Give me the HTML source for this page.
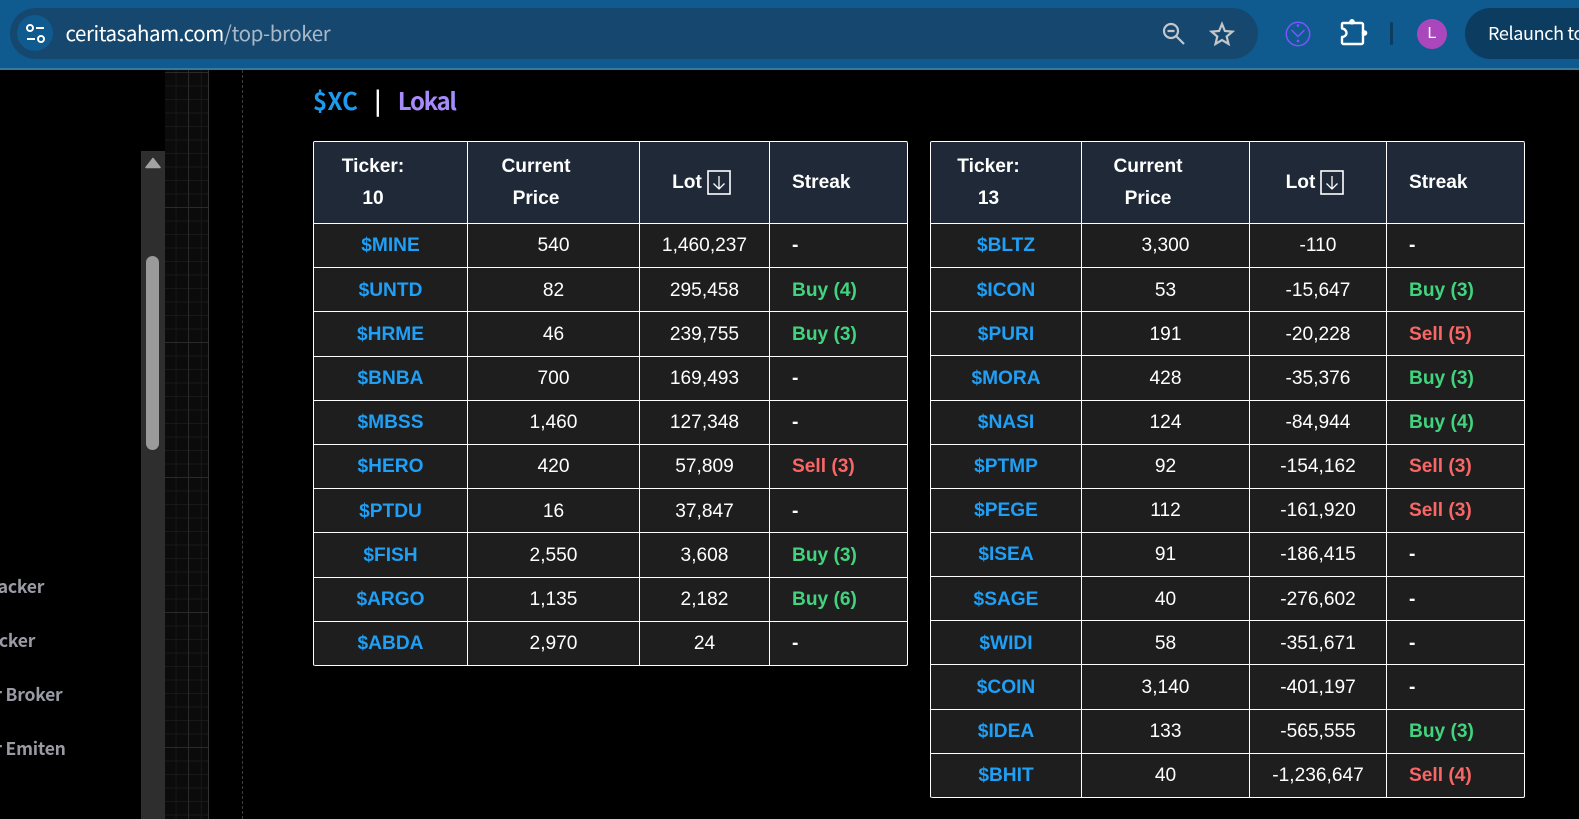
<!DOCTYPE html>
<html lang="en">
<head>
<meta charset="utf-8">
<title>ceritasaham.com/top-broker</title>
<style>
html,body{margin:0;padding:0;width:1579px;height:819px;background:#000;overflow:hidden;font-family:"Liberation Sans",Arial,sans-serif}
.abs{position:absolute}
#top{left:0;top:0;width:1579px;height:68px;background:#0f5a8f;border-bottom:2px solid #37789f}
#addr{left:10px;top:8px;width:1248px;height:51px;border-radius:26px;background:#16486f}
#site{left:17px;top:15px;width:36px;height:36px;border-radius:50%;background:#0f5a8f}
#url{left:65.5px;top:17px;font:20.5px/30px "Noto Sans CJK SC","Liberation Sans",sans-serif;color:#fff;white-space:nowrap;letter-spacing:-.42px}
#url span{color:#a9b8c6}
#pill{left:1465px;top:8px;width:130px;height:51px;border-radius:26px 0 0 26px;background:#0c3c60}
#pilltxt{left:1488px;top:19px;font:18px/28px "Noto Sans CJK SC","Liberation Sans",sans-serif;color:#fff;white-space:nowrap;letter-spacing:-.35px}
#sep{left:1390px;top:22px;width:3px;height:23px;border-radius:2px;background:#0c3c60}
#avatar{left:1417px;top:19px;width:30px;height:30px;border-radius:50%;background:#ab47bc;color:#fff;font:16px/30px "Liberation Sans",sans-serif;text-align:center}
#grid{left:165px;top:70px;width:43px;height:749px;border-right:1px solid #333;background-color:#0b0b0b;
background-image:linear-gradient(90deg,#2a2a2a 1px,transparent 1px),linear-gradient(#2a2a2a 1px,transparent 1px),linear-gradient(90deg,#181818 1px,transparent 1px),linear-gradient(#181818 1px,transparent 1px);
background-size:135px 135px,135px 135px,12.6px 13.5px,12.6px 13.5px;
background-position:23px 0,0 2px,-2px 0,0 2px}
#dash{left:242px;top:70px;width:0;height:749px;border-left:1px dashed #3d3d3d}
#sb{left:141px;top:151px;width:24px;height:668px;background:#2e2e2e}
#arrow{left:145px;top:157px}
#thumb{left:146px;top:256px;width:13px;height:194px;border-radius:7px;background:#9a9a9a}
.side{position:absolute;font:600 17.5px/24px "Noto Sans CJK SC","Liberation Sans",sans-serif;color:#9a9aa5;white-space:nowrap;letter-spacing:-.2px}
#title{left:313px;top:83px;font:700 24px/34px "Noto Sans CJK SC","Liberation Sans",sans-serif;white-space:nowrap}
#title .a{color:#1d9bf0;letter-spacing:.3px}#title .b{color:#fff;margin:0 16.500px 0 16px}#title .c{color:#a78bfa;letter-spacing:-1.35px}
table{position:absolute;top:141px;border-spacing:0;border-collapse:separate;table-layout:fixed;border-top:1px solid #fff;border-left:1px solid #fff;border-radius:2px;font-size:19.15px;color:#fff}
th,td{border-right:1px solid #fff;border-bottom:1px solid #fff;padding:0;text-align:center;box-sizing:border-box;white-space:nowrap}
th{background:#1f2937;height:82px;font-weight:700;line-height:32px}
td{background:#1e1e1e;height:44.15px;line-height:24px;padding-top:1.8px}
#t1 td{height:44.2px;padding-top:1.6px}
tr:first-child th:first-child{border-top-left-radius:1px}
tr:first-child th:last-child{border-top-right-radius:2px}
tr:last-child td:first-child{border-bottom-left-radius:2px}
tr:last-child td:last-child{border-bottom-right-radius:2px}
.h{display:inline-flex;align-items:center;justify-content:center}
.h i{display:block;width:35px}
.h b{display:block;text-align:center}
.lot{padding-right:6px}
.lot svg{display:block;margin-left:5px}
td.t{color:#1f9ff5;font-weight:700}
.s{text-align:left;padding-left:22px;font-weight:700}
td.g{color:#42d37e}td.r{color:#f86666}
</style>
</head>
<body>
<div class="abs" id="top"></div>
<div class="abs" id="addr"></div>
<div class="abs" id="site"></div>
<svg class="abs" style="left:24px;top:22px" width="24" height="24" viewBox="0 0 24 24" fill="none" stroke="#fff" stroke-width="2"><circle cx="6" cy="6" r="3"/><path d="M12 6h8M3 17h8"/><circle cx="17" cy="17" r="3"/></svg>
<div class="abs" id="url">ceritasaham.com<span>/top-broker</span></div>
<svg class="abs" style="left:1161px;top:21px" width="26" height="26" viewBox="0 0 26 26" fill="none" stroke="#c3c7ca" stroke-width="2.2"><circle cx="10" cy="10" r="7"/><path d="M6.5 10h7M15 15l8 8"/></svg>
<svg class="abs" style="left:1209px;top:21px" width="26" height="26" viewBox="0 0 26 26" fill="none" stroke="#c3c7ca" stroke-width="2.2" stroke-linejoin="miter"><path d="M13 3l2.900 7 7.500.6-5.700 4.900 1.800 7.400L13 19l-6.500 3.900 1.800-7.400-5.700-4.900 7.500-.6z"/></svg>
<svg class="abs" style="left:1284px;top:20px" width="28" height="28" viewBox="0 0 28 28" fill="none" stroke="#7a55ff" stroke-width="1.500"><circle cx="14" cy="14" r="11.700"/><path d="M8 10.500l6 6 6-6" stroke-linecap="round"/><circle cx="14" cy="5.500" r=".6"/><circle cx="14" cy="21" r=".6"/></svg>
<svg class="abs" style="left:1339px;top:19px" width="30" height="28" viewBox="0 0 30 28" fill="none" stroke="#fff" stroke-width="2.400" stroke-linejoin="round"><path d="M4 4h18.500a1.500 1.500 0 0 1 1.500 1.500v18a1.500 1.500 0 0 1-1.500 1.500H4.500A1.500 1.500 0 0 1 3 23.500V18c2.500 0 4.500-2 4.500-4S5.500 9.500 3 9.500V5a1 1 0 0 1 1-1z"/><circle cx="13" cy="2.800" r="2.800" fill="#fff" stroke="none"/><circle cx="25.500" cy="14" r="2.800" fill="#fff" stroke="none"/></svg>
<div class="abs" id="sep"></div>
<div class="abs" id="avatar">L</div>
<div class="abs" id="pill"></div>
<div class="abs" id="pilltxt">Relaunch to</div>

<div class="side" style="left:-19px;top:575px">Tracker</div>
<div class="side" style="left:-28px;top:629px">Tracker</div>
<div class="side" style="left:-5.7px;top:683px">r Broker</div>
<div class="side" style="left:-5.7px;top:737px">r Emiten</div>
<div class="abs" id="sb"></div>
<svg class="abs" id="arrow" width="16" height="12" viewBox="0 0 16 12"><path d="M8 1.500L15 10.500H1z" fill="#a3a3a3" stroke="#a3a3a3" stroke-width="1.500" stroke-linejoin="round"/></svg>
<div class="abs" id="thumb"></div>
<div class="abs" id="grid"></div>
<div class="abs" id="dash"></div>

<div class="abs" id="title"><span class="a">$XC</span><span class="b">|</span><span class="c">Lokal</span></div>

<table id="t1" style="left:313px;width:595px">
<colgroup><col style="width:154px"><col style="width:172px"><col style="width:130px"><col style="width:138px"></colgroup>
<thead><tr>
<th><span class="h"><b>Ticker:<br>10</b><i></i></span></th>
<th><span class="h"><b>Current<br>Price</b><i></i></span></th>
<th><span class="h lot">Lot<svg width="24" height="25" viewBox="0 0 24 25" fill="none" stroke="#fff"><rect x="1" y="1" width="22" height="23" stroke-width="1.600"/><path d="M12 6v13M6.500 13.500L12 19l5.500-5.500" stroke-width="1.300"/></svg></span></th>
<th class="s">Streak</th>
</tr></thead>
<tbody>
<tr><td class="t">$MINE</td><td>540</td><td>1,460,237</td><td class="s">-</td></tr>
<tr><td class="t">$UNTD</td><td>82</td><td>295,458</td><td class="s g">Buy (4)</td></tr>
<tr><td class="t">$HRME</td><td>46</td><td>239,755</td><td class="s g">Buy (3)</td></tr>
<tr><td class="t">$BNBA</td><td>700</td><td>169,493</td><td class="s">-</td></tr>
<tr><td class="t">$MBSS</td><td>1,460</td><td>127,348</td><td class="s">-</td></tr>
<tr><td class="t">$HERO</td><td>420</td><td>57,809</td><td class="s r">Sell (3)</td></tr>
<tr><td class="t">$PTDU</td><td>16</td><td>37,847</td><td class="s">-</td></tr>
<tr><td class="t">$FISH</td><td>2,550</td><td>3,608</td><td class="s g">Buy (3)</td></tr>
<tr><td class="t">$ARGO</td><td>1,135</td><td>2,182</td><td class="s g">Buy (6)</td></tr>
<tr><td class="t">$ABDA</td><td>2,970</td><td>24</td><td class="s">-</td></tr>
</tbody>
</table>

<table style="left:930px;width:595px">
<colgroup><col style="width:151px"><col style="width:168px"><col style="width:137px"><col style="width:138px"></colgroup>
<thead><tr>
<th><span class="h"><b>Ticker:<br>13</b><i></i></span></th>
<th><span class="h"><b>Current<br>Price</b><i></i></span></th>
<th><span class="h lot">Lot<svg width="24" height="25" viewBox="0 0 24 25" fill="none" stroke="#fff"><rect x="1" y="1" width="22" height="23" stroke-width="1.600"/><path d="M12 6v13M6.500 13.500L12 19l5.500-5.500" stroke-width="1.300"/></svg></span></th>
<th class="s">Streak</th>
</tr></thead>
<tbody>
<tr><td class="t">$BLTZ</td><td>3,300</td><td>-110</td><td class="s">-</td></tr>
<tr><td class="t">$ICON</td><td>53</td><td>-15,647</td><td class="s g">Buy (3)</td></tr>
<tr><td class="t">$PURI</td><td>191</td><td>-20,228</td><td class="s r">Sell (5)</td></tr>
<tr><td class="t">$MORA</td><td>428</td><td>-35,376</td><td class="s g">Buy (3)</td></tr>
<tr><td class="t">$NASI</td><td>124</td><td>-84,944</td><td class="s g">Buy (4)</td></tr>
<tr><td class="t">$PTMP</td><td>92</td><td>-154,162</td><td class="s r">Sell (3)</td></tr>
<tr><td class="t">$PEGE</td><td>112</td><td>-161,920</td><td class="s r">Sell (3)</td></tr>
<tr><td class="t">$ISEA</td><td>91</td><td>-186,415</td><td class="s">-</td></tr>
<tr><td class="t">$SAGE</td><td>40</td><td>-276,602</td><td class="s">-</td></tr>
<tr><td class="t">$WIDI</td><td>58</td><td>-351,671</td><td class="s">-</td></tr>
<tr><td class="t">$COIN</td><td>3,140</td><td>-401,197</td><td class="s">-</td></tr>
<tr><td class="t">$IDEA</td><td>133</td><td>-565,555</td><td class="s g">Buy (3)</td></tr>
<tr><td class="t">$BHIT</td><td>40</td><td>-1,236,647</td><td class="s r">Sell (4)</td></tr>
</tbody>
</table>
</body>
</html>
